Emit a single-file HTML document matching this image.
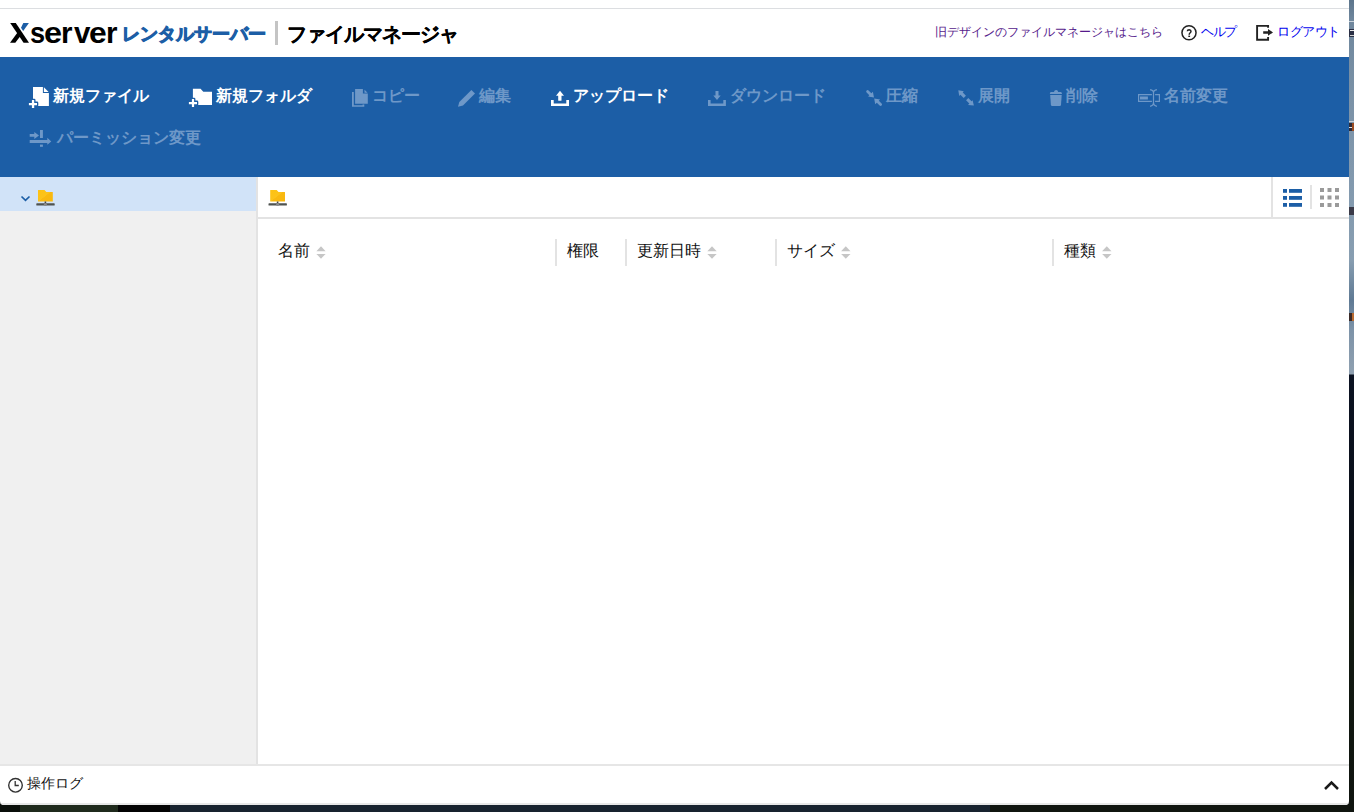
<!DOCTYPE html>
<html><head><meta charset="utf-8">
<style>
*{box-sizing:border-box}
html,body{margin:0;padding:0}
body{width:1354px;height:812px;position:relative;overflow:hidden;background:#0f140f;font-family:"Liberation Sans",sans-serif}
.a{position:absolute}
svg{position:absolute;overflow:visible}
#win{left:0;top:0;width:1349px;height:805px;background:#fff;border-radius:0 0 4px 4px;overflow:hidden}
#topline{left:0;top:8px;width:1349px;height:1px;background:#dcdee1}
#tb{left:0;top:57px;width:1349px;height:120px;background:#1c5ea6}
#side{left:0;top:177px;width:256px;height:588px;background:#f0f0f0}
#sel{left:0;top:177px;width:256px;height:34px;background:#d1e3f8}
#sdiv{left:256px;top:177px;width:2px;height:588px;background:#e3e3e3}
#crumbline{left:258px;top:217px;width:1091px;height:2px;background:#e3e3e3}
#bot{left:0;top:764px;width:1349px;height:2px;background:#e6e6e6}
#botline{left:0;top:803px;width:1349px;height:2px;background:#e8e8e8}
.t{position:absolute;white-space:nowrap;font-size:16px;line-height:20px;font-weight:bold;color:#fff}
.d{color:#6e98c8}
.h{position:absolute;white-space:nowrap;font-size:16px;line-height:20px;color:#111}
.vd{position:absolute;top:239px;width:2px;height:27px;background:#e3e3e3}
</style></head>
<body>
<div class="a" style="left:1349px;top:0;width:5px;height:812px;background:linear-gradient(to bottom,#5d758c 0px,#6f879d 20px,#7b92a7 100px,#8299ae 180px,#889eb1 260px,#5f7a94 300px,#7d93a8 330px,#8fa0b0 374px,#0b1222 375px,#0a0f16 560px,#121a12 600px,#0f140f 812px)"></div>
<div class="a" style="left:0;top:805px;width:20px;height:7px;background:#0a0f0a"></div>
<div class="a" style="left:20px;top:805px;width:98px;height:7px;background:#1f2a1c"></div>
<div class="a" style="left:118px;top:805px;width:52px;height:7px;background:#030303"></div>
<div class="a" style="left:170px;top:805px;width:820px;height:7px;background:#18232f"></div>
<div class="a" style="left:990px;top:805px;width:359px;height:7px;background:#10150f"></div>
<div class="a" style="left:1349px;top:21px;width:5px;height:1px;background:#c9d2da"></div>
<div class="a" style="left:1349px;top:29px;width:5px;height:8px;background:#2a2f45"></div>
<div class="a" style="left:1350px;top:30px;width:4px;height:1px;background:#e8e8e8"></div>
<div class="a" style="left:1350px;top:35px;width:4px;height:1px;background:#d0d0d0"></div>
<div class="a" style="left:1349px;top:121px;width:5px;height:1px;background:#c9d2da"></div>
<div class="a" style="left:1349px;top:123px;width:5px;height:8px;background:#2b2b3a"></div>
<div class="a" style="left:1349px;top:127px;width:3px;height:1px;background:#e0e0e0"></div>
<div class="a" style="left:1352px;top:123px;width:2px;height:8px;background:#9a4a20"></div>
<div class="a" style="left:1349px;top:207px;width:5px;height:8px;background:#3a3a48"></div>
<div class="a" style="left:1349px;top:313px;width:5px;height:8px;background:#3b2a28"></div>
<div class="a" style="left:1352px;top:313px;width:2px;height:8px;background:#b86a30"></div>
<div id="win" class="a">
<div id="topline" class="a"></div>

<!-- header -->
<svg style="left:0;top:0" width="40" height="50" viewBox="0 0 40 50">
<polygon points="10.2,23 15.8,23 29,42.8 23.6,42.8" fill="#000"/>
<polygon points="10,42.8 15.3,42.8 21.6,34.6 19,30.6" fill="#000"/>
<polygon points="23.3,23 28.9,23 23.2,31 21,27.8" fill="#1c5ea6"/>
</svg>
<div class="a" style="left:0;top:16px;font-size:29.5px;font-weight:bold;color:#000;white-space:nowrap">
<span class="a" style="left:30px;transform:scaleX(0.92);transform-origin:0 0">s</span><span class="a" style="left:44px;transform:scaleX(1.1);transform-origin:0 0">e</span><span class="a" style="left:61px">r</span><span class="a" style="left:74px">v</span><span class="a" style="left:89.2px;transform:scaleX(1.08);transform-origin:0 0">e</span><span class="a" style="left:106px">r</span></div>
<div class="a" style="left:122px;top:24px;font-size:18px;line-height:20px;font-weight:bold;color:#1c5ea6;-webkit-text-stroke:1px #1c5ea6;white-space:nowrap">レンタルサーバー</div>
<div class="a" style="left:275px;top:21px;width:3px;height:24px;background:#c4c4c4"></div>
<div class="a" style="left:287px;top:23.5px;font-size:20px;line-height:20px;letter-spacing:-1px;font-weight:bold;color:#000;-webkit-text-stroke:0.15px #000;white-space:nowrap">ファイルマネージャ</div>
<div class="a" style="left:935px;top:22px;font-size:12px;line-height:20px;color:#551a8b;white-space:nowrap">旧デザインのファイルマネージャはこちら</div>
<svg style="left:0;top:0" width="1354" height="60" viewBox="0 0 1354 60">
<circle cx="1189" cy="32.8" r="7.05" fill="none" stroke="#222" stroke-width="1.5"/>
<path d="M1187.3 31.3Q1187.4 29.7 1189.2 29.7Q1191 29.8 1191 31.3Q1191 32.3 1190 33Q1189.2 33.6 1189.2 34.7" fill="none" stroke="#222" stroke-width="1.5"/>
<rect x="1188.3" y="35.6" width="1.8" height="1.4" fill="#222"/>
</svg>
<div class="a" style="left:1201px;top:22px;font-size:12.5px;line-height:20px;color:#0000ee;letter-spacing:-1.3px;white-space:nowrap">ヘルプ</div>
<svg style="left:0;top:0" width="1354" height="60" viewBox="0 0 1354 60">
<path d="M1268.1 27.7V25.9H1257.1V39.8H1268.1V37.1" fill="none" stroke="#222" stroke-width="1.9"/>
<path d="M1263.2 31.2H1268V29L1273 32.4L1268 35.7V33.7H1263.2Z" fill="#222"/>
</svg>
<div class="a" style="left:1277px;top:22px;font-size:12.5px;line-height:20px;color:#0000ee;letter-spacing:-0.4px;white-space:nowrap">ログアウト</div>

<!-- toolbar -->
<div id="tb" class="a"></div>
<svg style="left:0;top:0" width="1354" height="180" viewBox="0 0 1354 180">
<!-- new file -->
<path d="M33 87H42.9V93H48.9V105.9H33Z" fill="#fff"/>
<path d="M43.9 87.3L48.6 92H43.9Z" fill="#fff"/>
<path d="M31.9 100H34.2V102.9H37V105.3H34.2V107.9H31.9V105.3H28.9V102.9H31.9Z" fill="#fff" stroke="#1c5ea6" stroke-width="2.6" stroke-linejoin="round"/>
<path d="M31.9 100H34.2V102.9H37V105.3H34.2V107.9H31.9V105.3H28.9V102.9H31.9Z" fill="#fff"/>
<!-- new folder -->
<path d="M192.9 88.8H200.6L203.3 91.7H212V105H192.9Z" fill="#fff"/>
<path d="M191.9 99H194.1V101.9H197V104.3H194.1V107H191.9V104.3H188.9V101.9H191.9Z" fill="#fff" stroke="#1c5ea6" stroke-width="2.6" stroke-linejoin="round"/>
<path d="M191.9 99H194.1V101.9H197V104.3H194.1V107H191.9V104.3H188.9V101.9H191.9Z" fill="#fff"/>
<g fill="#6e98c8">
<!-- copy -->
<path d="M355.1 89.1H362.9V93.5H367.8V103.7H355.1Z"/>
<path d="M364.5 89.8L367.6 92.8H364.5Z"/>
<path d="M352 92H353.8V105.2H362.5V104.6H364.3V106.8H352Z"/>
<!-- edit -->
<path d="M471.4 90L475 93.6L463 105.4L458 106.8L459.3 101.9Z"/>
<!-- download -->
<path d="M708 99.9H710.6V103.4H723.3V99.9H725.9V106H708Z"/>
<path d="M715.5 91H718.5V95.6H720.7L717 100L713.3 95.6H715.5Z"/>
<!-- compress -->
<path d="M867.6 91.6L871.6 95.6" stroke="#6e98c8" stroke-width="2.8" stroke-linecap="round"/>
<path d="M874 97.6L872.9 91.8L868.1 96.6Z"/>
<path d="M880.6 104.6L876.6 100.6" stroke="#6e98c8" stroke-width="2.8" stroke-linecap="round"/>
<path d="M874.2 98.4L875.2 104.2L880.1 99.4Z"/>
<!-- expand -->
<path d="M958.3 90.2L963.8 91.3L959.2 95.9Z"/>
<path d="M960.5 92.5L964.8 96.8" stroke="#6e98c8" stroke-width="3.2"/>
<path d="M973.9 105.6L972.6 100.2L968 104.9Z"/>
<path d="M967.2 99.2L971.4 103.4" stroke="#6e98c8" stroke-width="3.2"/>
<!-- trash -->
<path d="M1054 92.1Q1054.3 90 1056.1 90Q1057.9 90 1058.2 92.1H1060.8Q1061.9 92.3 1061.9 93.2V94H1049.9V93.2Q1049.9 92.3 1051 92.1Z"/>
<path d="M1050.2 95H1061.7L1061 105Q1060.8 106 1059.8 106H1052.1Q1051.1 106 1050.9 105Z"/>
<!-- rename -->
<path d="M1151.9 94.6H1138.6V101.4H1151.9M1155.1 94.6H1159.4V101.4H1155.1" fill="none" stroke="#6e98c8" stroke-width="1.2"/>
<rect x="1140" y="96.5" width="7.9" height="3"/>
<path d="M1150.1 89.7Q1153.5 90.4 1153.5 92.5V103Q1153.5 105.6 1150.1 106.3M1156.9 89.7Q1153.5 90.4 1153.5 92.5M1153.5 103Q1153.5 105.6 1156.9 106.3" fill="none" stroke="#6e98c8" stroke-width="1.2"/>
<!-- permission -->
<path d="M29.7 134.1H34.3V131.9L39 135.5L34.3 138.9V136.8H29.7Z"/>
<rect x="40" y="130" width="2.9" height="8"/>
<path d="M29.7 139.9H47.3V137.8L51.3 141.4L47.3 144.8V142.9H29.7Z"/>
<rect x="40" y="144.6" width="2.9" height="2.2"/>
</g>
<!-- upload -->
<path d="M551 99.9H553.7V103.4H566.3V99.9H569V106H551Z" fill="#fff"/>
<path d="M558.2 100.2V95.75H556L560 90.7L564 95.75H561.5V100.2Q561.5 100.8 560.8 100.8H558.9Q558.2 100.8 558.2 100.2Z" fill="#fff"/>
</svg>
<div class="t" style="left:53px;top:86px">新規ファイル</div>
<div class="t" style="left:216px;top:86px">新規フォルダ</div>
<div class="t d" style="left:372px;top:86px">コピー</div>
<div class="t d" style="left:479px;top:86px">編集</div>
<div class="t" style="left:573px;top:86px">アップロード</div>
<div class="t d" style="left:730px;top:86px">ダウンロード</div>
<div class="t d" style="left:886px;top:86px">圧縮</div>
<div class="t d" style="left:978px;top:86px">展開</div>
<div class="t d" style="left:1066px;top:86px">削除</div>
<div class="t d" style="left:1164px;top:86px">名前変更</div>
<div class="t d" style="left:57px;top:128px">パーミッション変更</div>

<!-- sidebar/content -->
<div id="side" class="a"></div>
<div id="sel" class="a"></div>
<div id="sdiv" class="a"></div>
<div id="crumbline" class="a"></div>

<div class="h" style="left:278px;top:241px">名前</div>
<div class="vd" style="left:555px"></div>
<div class="h" style="left:567px;top:241px">権限</div>
<div class="vd" style="left:625px"></div>
<div class="h" style="left:637px;top:241px">更新日時</div>
<div class="vd" style="left:775px"></div>
<div class="h" style="left:787px;top:241px">サイズ</div>
<div class="vd" style="left:1052px"></div>
<div class="h" style="left:1064px;top:241px">種類</div>

<div id="bot" class="a"></div>
<div class="a" style="left:27px;top:773px;font-size:14px;line-height:20px;color:#111;white-space:nowrap">操作ログ</div>
<div id="botline" class="a"></div>
<svg style="left:0;top:0" width="1354" height="812" viewBox="0 0 1354 812">
<defs>
<linearGradient id="fg" x1="0" y1="0" x2="1" y2="1">
<stop offset="0" stop-color="#fdc213"/><stop offset="0.5" stop-color="#fcc31a"/><stop offset="0.52" stop-color="#f9b910"/><stop offset="1" stop-color="#f8b70e"/>
</linearGradient>
<g id="nf">
<path d="M38 190.2Q38 190 38.3 190H44.5L46.3 191.9H52.6Q52.8 191.9 52.8 192.2V201.4Q52.8 201.6 52.6 201.6H38.3Q38 201.6 38 201.4Z" fill="url(#fg)"/>
<rect x="44.6" y="201.5" width="1.6" height="2.2" fill="#444"/>
<rect x="36.3" y="203.3" width="18.4" height="2.2" rx="0.6" fill="#4f5350"/>
<circle cx="45.4" cy="204.4" r="1.5" fill="#8a8a8a"/>
</g>
</defs>
<path d="M21.5 196.5L25.5 200.4L29.5 196.5" fill="none" stroke="#1c5ea6" stroke-width="1.7"/>
<use href="#nf"/>
<use href="#nf" x="232.2"/>
<rect x="1271" y="177" width="2" height="40" fill="#e3e3e3"/>
<rect x="1310" y="185" width="2" height="24" fill="#e3e3e3"/>
<g fill="#1c5ea6">
<rect x="1283" y="189" width="4" height="3.8"/><rect x="1289" y="189" width="13" height="3.8"/>
<rect x="1283" y="196" width="4" height="3.8"/><rect x="1289" y="196" width="13" height="3.8"/>
<rect x="1283" y="203" width="4" height="3.8"/><rect x="1289" y="203" width="13" height="3.8"/>
</g>
<g fill="#9a9a9a">
<rect x="1320" y="188" width="4" height="4"/><rect x="1327.5" y="188" width="4" height="4"/><rect x="1335" y="188" width="4" height="4"/>
<rect x="1320" y="195.5" width="4" height="4"/><rect x="1327.5" y="195.5" width="4" height="4"/><rect x="1335" y="195.5" width="4" height="4"/>
<rect x="1320" y="203" width="4" height="4"/><rect x="1327.5" y="203" width="4" height="4"/><rect x="1335" y="203" width="4" height="4"/>
</g>
<g fill="#c6c6c6">
<path d="M316.4 251.2L321 246.3L325.6 251.2Z"/><path d="M316.4 253.9L321 258.8L325.6 253.9Z"/>
<path d="M707.3 251.2L712 246.3L716.7 251.2Z"/><path d="M707.3 253.9L712 258.8L716.7 253.9Z"/>
<path d="M841.1 251.2L845.8 246.3L850.5 251.2Z"/><path d="M841.1 253.9L845.8 258.8L850.5 253.9Z"/>
<path d="M1102.1 251.2L1106.8 246.3L1111.5 251.2Z"/><path d="M1102.1 253.9L1106.8 258.8L1111.5 253.9Z"/>
</g>
<circle cx="15.5" cy="785.3" r="6.8" fill="none" stroke="#333" stroke-width="1.4"/>
<path d="M15.2 781V785.5H18.8" fill="none" stroke="#333" stroke-width="1.3"/>
<path d="M1325 789L1331.5 782.5L1338 789" fill="none" stroke="#1a1a1a" stroke-width="2.5"/>
</svg>
</div>
</body></html>
